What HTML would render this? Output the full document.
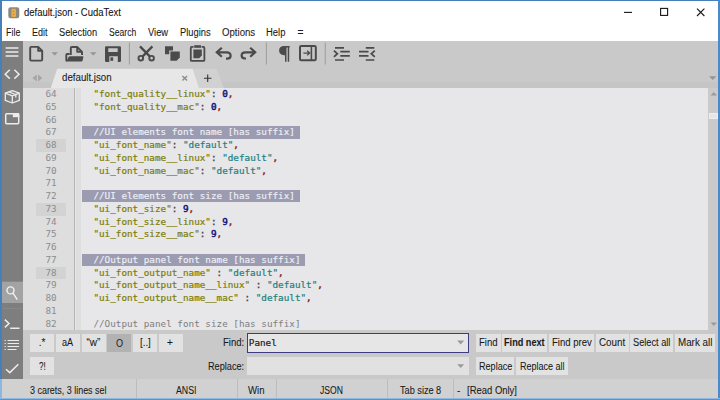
<!DOCTYPE html>
<html><head><meta charset="utf-8"><title>default.json - CudaText</title>
<style>
*{box-sizing:border-box;margin:0;padding:0}
html,body{width:720px;height:400px;overflow:hidden;background:#fff}
body{position:relative;font-family:"Liberation Sans",sans-serif;font-size:9.4px;color:#1a1a1a}
.abs,#win div,#win span.a,#win svg{position:absolute}
#win{position:absolute;left:0;top:0;width:720px;height:400px;background:#fff;overflow:hidden}
/* window frame */
.fr{background:#477fb9;z-index:50}
.t{white-space:nowrap;line-height:12px;height:12px;-webkit-text-stroke:0.2px #1a1a1a}
.f{font-size:10px;transform-origin:0 0;-webkit-text-stroke:0.08px #1a1a1a}
/* title */
#title{left:24px;top:6.5px;font-size:9.6px;color:#111}
.menu{top:26px;font-size:9.4px;color:#111}
/* toolbar */
#toolbar{left:23px;top:41px;width:696px;height:27px;background:#c9c9c9}
#sidebar{left:1px;top:41px;width:22px;height:337.8px;background:#7e7e7e}
#tabbar{left:23px;top:67px;width:696px;height:21px;background:#c9c9c9}
#editor{left:23px;top:88px;width:685px;height:242px;background:#e7e7e9;overflow:hidden}
#gutter{left:23px;top:88px;width:43.5px;height:242px;background:#dedede}
#fold{left:66.5px;top:88px;width:8px;height:242px;background:#dedede}
#gline{left:74.3px;top:88px;width:1.2px;height:242px;background:#b4b4b4}
#gline2{left:75.5px;top:88px;width:5.5px;height:242px;background:#dedede}
.ln{left:36px;width:30px;height:12.75px;line-height:12.75px;text-align:center;font-family:"DejaVu Sans Mono","Liberation Mono",monospace;font-size:9.3px;color:#8c8c8c;white-space:pre}
.curln{left:36.2px;width:30px;height:12.6px;background:#d3d3d3}
.cl{left:93.4px;height:12.75px;line-height:12.75px;font-family:"DejaVu Sans Mono","Liberation Mono",monospace;font-size:9.3px;white-space:pre;color:#555}
.cl span{position:static}
.k{color:#7e7e08;-webkit-text-stroke:0.22px #7e7e08}
.s{color:#1f8080;-webkit-text-stroke:0.22px #1f8080}
.n{color:#10107a;-webkit-text-stroke:0.45px #10107a}
.p{color:#454548;-webkit-text-stroke:0.35px #454548}
.c{color:#8e1c1c;-webkit-text-stroke:0.45px #8e1c1c}
.sel{color:#f0f0f4;-webkit-text-stroke:0.15px #f0f0f4}
.cmt{color:#7d7d7d}
.selbg{left:81.8px;height:12.6px;background:#9b9bb2}
/* scrollbar */
#vscroll{left:708.2px;top:88px;width:10.5px;height:242px;background:#cacaca}
#thumb{left:709px;top:113px;width:9.3px;height:6px;background:#e6e6e6;border:1px solid #efefef}
/* find panel */
#findp{left:23px;top:329.5px;width:696px;height:50px;background:#c9c9c9}
.btn{-webkit-text-stroke:0.2px #1a1a1a;height:18px;background:#e2e2e2;text-align:center;line-height:17.5px;font-size:9.4px;color:#1a1a1a;white-space:nowrap}
.btn.on{background:#b2b2b2}
.r1{top:333.5px}.r2{top:357px}
#status{left:1px;top:379.3px;width:718px;height:19.5px;background:#d1d1d1}
.sdiv{top:379.3px;width:1px;height:19.5px;background:#bdbdbd}
.st{top:383.5px;font-size:9.4px;color:#1a1a1a}
.lbl{font-size:9.4px;color:#1a1a1a;text-align:right}
#fin{left:247px;top:333px;width:221.5px;height:20px;background:#e6e6e6;border:1.3px solid #3c3c84}
#rin{left:247px;top:357px;width:221.5px;height:18px;background:#e1e1e1}
</style></head><body>
<div id="win">
<!-- title bar -->
<svg style="left:7.6px;top:6.9px" width="12" height="12" viewBox="0 0 12 12"><rect x="0.3" y="0.3" width="11" height="11" rx="2.2" fill="#8b897d"/><rect x="3.4" y="1.8" width="4.6" height="8.2" rx="1" fill="#e9ab4c"/><rect x="5.1" y="3.6" width="1.2" height="1.3" fill="#c98a2e"/><rect x="5.1" y="6.6" width="1.2" height="1.3" fill="#c98a2e"/></svg>
<svg style="left:620px;top:4px" width="90" height="16" viewBox="0 0 90 16"><g stroke="#161616" stroke-width="1.1" fill="none"><path d="M4 8.4h8"/><rect x="40.6" y="4.4" width="7" height="7"/><path d="M77 4.6l7.4 7.4M84.4 4.6L77 12"/></g></svg>
<!-- menu -->
<!-- toolbar -->
<div id="toolbar"></div>
<div id="tabbar"></div>
<div id="sidebar"></div>
<!-- sidebar icons -->
<svg style="left:0;top:40px" width="24" height="340" viewBox="0 40 24 340">
<g stroke="#ececec" stroke-width="1.5" fill="none" stroke-linecap="butt" stroke-linejoin="miter">
<path d="M5.6 48.1H18.4M5.6 52.1H18.4M5.6 56H18.4"/>
<path d="M9.8 69.8L5.2 74.2L9.8 78.6M14.4 69.8L19 74.2L14.4 78.6"/>
<!-- box -->
<g stroke-width="1.3" stroke-linejoin="round">
<path d="M5.3 93.2L12.3 90.6L19.3 93.2V100.4L12.3 103L5.3 100.4Z"/>
<path d="M5.3 93.2L12.3 95.8L19.3 93.2M12.3 95.8V103"/>
<path d="M8.8 91.9L15.8 94.5V97.4"/>
</g>
<!-- tab window -->
<rect x="5.7" y="113.7" width="13" height="10" rx="1"/>
<!-- search -->
</g>
<rect x="12.8" y="113.2" width="6.4" height="4" fill="#ececec"/>
<rect x="1.5" y="281.7" width="21.5" height="21.3" fill="#a3a3a3"/>
<g stroke="#f2f2f2" stroke-width="1.4" fill="none">
<circle cx="10.5" cy="290.4" r="3.5"/><path d="M13 293.2L17.3 299.6"/>
</g>
<rect x="2.5" y="308" width="19.5" height="0.9" fill="#8a8a8a"/>
<g stroke="#ececec" stroke-width="1.5" fill="none">
<path d="M4.9 319.6L9 323.5L4.9 327.4M10.2 328.3H19.5"/>
<path d="M7.6 340.5H19M7.6 343.5H19M7.6 346.5H19M7.6 349.5H16.5" stroke-width="1.1"/>
<path d="M4.6 340.5H5.8M4.6 343.5H5.8M4.6 346.5H5.8M4.6 349.5H5.8" stroke-width="1.1"/>
<path d="M6 369.2L9.8 372.6L18.3 364.3"/>
</g>
</svg>
<!-- toolbar icons -->
<svg style="left:24px;top:41px" width="696" height="26" viewBox="24 41 696 26">
<g fill="none" stroke="#4a4a4a" stroke-width="1.9" stroke-linejoin="round">
<!-- new -->
<path d="M31.2 46.9H38.2L42.2 50.9V59.6Q42.2 60.6 41.2 60.6H31.2Q30.2 60.6 30.2 59.6V47.9Q30.2 46.9 31.2 46.9Z"/>
<path d="M38.2 46.9V50.9H42.2"/>
<!-- open -->
<path d="M70.8 55V48Q70.8 47 71.8 47H77.2L82 51.8V55"/>
<path d="M77.2 47V51.8H82"/>
<path d="M69.6 54H67.2Q66.3 54 66.3 54.9V59.9Q66.3 60.8 67.1 60.8"/>
</g>
<path d="M70 56.2H82.7Q83.6 56.2 83.4 57.1L82.6 60.6Q82.4 61.5 81.5 61.5H67.2Q66.4 61.5 66.7 60.6L68.6 57Q69 56.2 70 56.2Z" fill="#4a4a4a"/>
<!-- arrows -->
<path d="M51.4 52.2H58L54.7 55.6Z" fill="#949494"/>
<path d="M90 52.2H96.6L93.3 55.6Z" fill="#949494"/>
<!-- save -->
<path d="M106.2 46.2H119.8Q121 46.2 121 47.4V60.8Q121 62 119.8 62H106.2Q105 62 105 60.8V47.4Q105 46.2 106.2 46.2ZM108.3 48.3V52H117.7V48.3ZM109.3 56.2V62H117.8V56.2Z" fill="#4b4b4b" fill-rule="evenodd"/>
<rect x="110.4" y="57.4" width="2.8" height="3.4" fill="#4b4b4b"/>
<!-- separators -->
<path d="M129.4 42.5V64.4M266.4 42.5V64.4M325.3 42.5V64.4" stroke="#a0a0a0" stroke-width="1.1"/>
<!-- scissors -->
<g fill="none" stroke="#4a4a4a" stroke-width="1.9">
<circle cx="140.8" cy="58.2" r="2.3"/><circle cx="151.6" cy="58.2" r="2.3"/>
<path d="M140 46.4L150 56.6M152.4 46.4L142.4 56.6" stroke-width="2.3"/>
</g>
<!-- copy -->
<path d="M165 46.2H173V50.6H169.2V54.2H165Z" fill="#4b4b4b"/>
<path d="M170.4 51.6H179.8V57.6L176.6 60.8H170.4Z" fill="#4b4b4b"/>
<!-- paste -->
<g fill="none" stroke="#4a4a4a" stroke-width="1.8" stroke-linejoin="round">
<path d="M193.6 46.9H191.8Q190.8 46.9 190.8 47.9V59.9Q190.8 60.9 191.8 60.9H203.4Q204.4 60.9 204.4 59.9V47.9Q204.4 46.9 203.4 46.9H201.6"/>
</g>
<rect x="194.2" y="45.2" width="6.8" height="2.6" fill="#4b4b4b"/>
<path d="M193.4 49.6H201.8V55.4L199.2 58.2H193.4Z" fill="#4b4b4b"/>
<!-- undo / redo -->
<g fill="none" stroke="#4a4a4a" stroke-width="2.2">
<path d="M221.8 47.8L216.8 52.3L221.8 56.8M217 52.3H226.6Q230.6 52.3 230.6 55.8Q230.6 58.7 227.2 58.7H226"/>
<path d="M250.2 47.8L255.2 52.3L250.2 56.8M255 52.3H245.6Q241.6 52.3 241.6 55.6Q241.6 58.5 245 58.5H246"/>
</g>
<!-- pilcrow -->
<path d="M284.2 46.1H289.7V47.5H289.2V61.7H287.7V47.5H286.5V61.7H285V55.2H284.2Q279.1 55 279.1 50.6Q279.1 46.3 284.2 46.1Z" fill="#4a4a4a"/>
<!-- indent box -->
<rect x="300" y="46" width="15.8" height="14.2" rx="1.2" fill="none" stroke="#4a4a4a" stroke-width="2"/>
<path d="M311.4 46V60.4" stroke="#4a4a4a" stroke-width="1.6"/>
<path d="M303.4 53.1H309.4M307.2 50.8L309.6 53.1L307.2 55.4" stroke="#4a4a4a" stroke-width="1.3" fill="none"/>
<!-- indent/unindent -->
<g stroke="#4a4a4a" stroke-width="1.7" fill="none">
<path d="M335 47.8H344M340.3 51.7H349.8M340.3 55.8H349.8M335 60H344"/>
<path d="M333.9 50.6L337.4 53.75L333.9 56.9"/>
<path d="M365.8 47.8H374.3M359 51.7H368.5M359 55.8H368.5M365.8 60H374.3"/>
<path d="M374.8 50.6L371.3 53.75L374.8 56.9"/>
</g>
</svg>
<!-- tab bar -->
<svg style="left:23px;top:67px" width="696" height="21" viewBox="23 67 696 21">
<rect x="23" y="82" width="696" height="6" fill="#c5c5c5"/>
<path d="M198.5 88L192.6 69H216.6L224 88Z" fill="#d1d1d1"/>
<path d="M50.8 88L57.2 68.8H192.6L199 88Z" fill="#e7e7e7"/>

<path d="M36.8 74.6V81.4L32.4 78ZM38 74.6V81.4L42.4 78Z" fill="#a6a6a6"/>
<path d="M182.4 75.9L187.1 80.6M187.1 75.9L182.4 80.6" stroke="#8c8c8c" stroke-width="1.4"/>
<path d="M204 78.2H211.4M207.7 74.5V81.9" stroke="#333" stroke-width="1.1"/>
<path d="M709 76.2H716.4L712.7 79.9Z" fill="#949494"/>
</svg>

<!-- editor -->
<div id="editor"></div>
<div id="gutter"></div><div id="fold"></div><div id="gline"></div><div id="gline2"></div>
<div class="ln" style="top:88.00px">64</div>
<div class="cl" style="top:88.00px"><span class="k">&quot;font_quality__linux&quot;</span><span class="p">: </span><span class="n">0</span><span class="c">,</span></div>
<div class="ln" style="top:100.75px">65</div>
<div class="cl" style="top:100.75px"><span class="k">&quot;font_quality__mac&quot;</span><span class="p">: </span><span class="n">0</span><span class="c">,</span></div>
<div class="ln" style="top:113.50px">66</div>
<div class="ln" style="top:126.25px">67</div>
<div class="selbg" style="top:126.10px;width:217.8px"></div>
<div class="cl sel" style="top:126.25px">//UI elements font name [has suffix]</div>
<div class="curln" style="top:139.40px"></div>
<div class="ln" style="top:139.00px">68</div>
<div class="cl" style="top:139.00px"><span class="k">&quot;ui_font_name&quot;</span><span class="p">: </span><span class="s">&quot;default&quot;</span><span class="c">,</span></div>
<div class="ln" style="top:151.75px">69</div>
<div class="cl" style="top:151.75px"><span class="k">&quot;ui_font_name__linux&quot;</span><span class="p">: </span><span class="s">&quot;default&quot;</span><span class="c">,</span></div>
<div class="ln" style="top:164.50px">70</div>
<div class="cl" style="top:164.50px"><span class="k">&quot;ui_font_name__mac&quot;</span><span class="p">: </span><span class="s">&quot;default&quot;</span><span class="c">,</span></div>
<div class="ln" style="top:177.25px">71</div>
<div class="ln" style="top:190.00px">72</div>
<div class="selbg" style="top:189.85px;width:217.8px"></div>
<div class="cl sel" style="top:190.00px">//UI elements font size [has suffix]</div>
<div class="curln" style="top:203.15px"></div>
<div class="ln" style="top:202.75px">73</div>
<div class="cl" style="top:202.75px"><span class="k">&quot;ui_font_size&quot;</span><span class="p">: </span><span class="n">9</span><span class="c">,</span></div>
<div class="ln" style="top:215.50px">74</div>
<div class="cl" style="top:215.50px"><span class="k">&quot;ui_font_size__linux&quot;</span><span class="p">: </span><span class="n">9</span><span class="c">,</span></div>
<div class="ln" style="top:228.25px">75</div>
<div class="cl" style="top:228.25px"><span class="k">&quot;ui_font_size__mac&quot;</span><span class="p">: </span><span class="n">9</span><span class="c">,</span></div>
<div class="ln" style="top:241.00px">76</div>
<div class="ln" style="top:253.75px">77</div>
<div class="selbg" style="top:253.60px;width:223.4px"></div>
<div class="cl sel" style="top:253.75px">//Output panel font name [has suffix]</div>
<div class="curln" style="top:266.90px"></div>
<div class="ln" style="top:266.50px">78</div>
<div class="cl" style="top:266.50px"><span class="k">&quot;ui_font_output_name&quot;</span><span class="p"> : </span><span class="s">&quot;default&quot;</span><span class="c">,</span></div>
<div class="ln" style="top:279.25px">79</div>
<div class="cl" style="top:279.25px"><span class="k">&quot;ui_font_output_name__linux&quot;</span><span class="p"> : </span><span class="s">&quot;default&quot;</span><span class="c">,</span></div>
<div class="ln" style="top:292.00px">80</div>
<div class="cl" style="top:292.00px"><span class="k">&quot;ui_font_output_name__mac&quot;</span><span class="p"> : </span><span class="s">&quot;default&quot;</span><span class="c">,</span></div>
<div class="ln" style="top:304.75px">81</div>
<div class="ln" style="top:317.50px">82</div>
<div class="cl cmt" style="top:317.50px">//Output panel font size [has suffix]</div>
<div id="vscroll"></div><div id="thumb"></div>
<svg style="left:708px;top:88px" width="11" height="242" viewBox="708 88 11 242"><path d="M710.6 95.4H717L713.8 92Z" fill="#9a9a9a"/><path d="M710.6 322.6H717L713.8 326Z" fill="#9a9a9a"/></svg>
<!-- find panel -->
<div id="findp"></div>
<div class="btn r1" style="left:30.1px;width:24.3px"></div>
<div class="btn r1" style="left:55.8px;width:24.3px"></div>
<div class="btn r1" style="left:81.5px;width:24.3px"></div>
<div class="btn r1 on" style="left:107.2px;width:24.3px"></div>
<div class="t" style="left:115.9px;top:337px;font-size:11.4px;line-height:13px;height:13px;transform:scaleX(0.8);transform-origin:0 0;-webkit-text-stroke:0">O</div>
<div class="btn r1" style="left:132.9px;width:24.3px"></div>
<div class="btn r1" style="left:158.6px;width:24.3px"></div>
<div class="btn r2" style="left:30.1px;width:24.3px"></div>
<div id="fin"></div><div id="rin"></div>
<svg style="left:450px;top:335px" width="18" height="40" viewBox="450 335 18 40"><path d="M457.2 340.6H464.2L460.7 344.4Z" fill="#9a9a9a"/><path d="M457.2 364.2H464.2L460.7 368Z" fill="#9a9a9a"/></svg>
<div class="t" style="left:248.8px;top:336.6px;font-family:'DejaVu Sans Mono','Liberation Mono',monospace;font-size:9.3px;color:#222">Panel</div>
<div class="btn r1" style="left:476.3px;width:24.4px"></div>
<div class="btn r1" style="left:502.2px;width:45.2px;font-weight:bold"></div>
<div class="btn r1" style="left:548.9px;width:45.3px"></div>
<div class="btn r1" style="left:595.9px;width:32.8px"></div>
<div class="btn r1" style="left:630.2px;width:42.9px"></div>
<div class="btn r1" style="left:674.7px;width:40px"></div>
<div class="btn r2" style="left:476.3px;width:38.2px"></div>
<div class="btn r2" style="left:516.2px;width:52px"></div>
<!-- status -->
<div id="status"></div>
<div class="sdiv" style="left:136px"></div><div class="sdiv" style="left:236.5px"></div><div class="sdiv" style="left:276px"></div><div class="sdiv" style="left:387px"></div><div class="sdiv" style="left:452.5px"></div>
<div class="t f" style="left:24.18px;top:7.00px;transform:scaleX(0.9464);color:#111">default.json - CudaText</div>
<div class="t f" style="left:6.48px;top:27.00px;transform:scaleX(0.8933);">File</div>
<div class="t f" style="left:32.08px;top:27.00px;transform:scaleX(0.897);">Edit</div>
<div class="t f" style="left:59.39px;top:27.00px;transform:scaleX(0.925);">Selection</div>
<div class="t f" style="left:109.22px;top:27.00px;transform:scaleX(0.859);">Search</div>
<div class="t f" style="left:147.82px;top:27.00px;transform:scaleX(0.9365);">View</div>
<div class="t f" style="left:179.55px;top:27.00px;transform:scaleX(0.9323);">Plugins</div>
<div class="t f" style="left:221.77px;top:27.00px;transform:scaleX(0.9612);">Options</div>
<div class="t f" style="left:266.34px;top:27.00px;transform:scaleX(0.9436);">Help</div>
<div class="t f" style="left:297.60px;top:27.00px;transform:scaleX(1.0);">=</div>
<div class="t f" style="left:61.76px;top:72.00px;transform:scaleX(0.97);">default.json</div>
<div class="t f" style="left:29.80px;top:385.00px;transform:scaleX(0.8935);">3 carets, 3 lines sel</div>
<div class="t f" style="left:176.45px;top:385.00px;transform:scaleX(0.8756);">ANSI</div>
<div class="t f" style="left:248.45px;top:385.00px;transform:scaleX(0.9612);">Win</div>
<div class="t f" style="left:320.44px;top:385.00px;transform:scaleX(0.8583);">JSON</div>
<div class="t f" style="left:400.02px;top:385.00px;transform:scaleX(0.9153);">Tab size 8</div>
<div class="t f" style="left:457.00px;top:385.00px;transform:scaleX(1.0);">-</div>
<div class="t f" style="left:466.54px;top:385.00px;transform:scaleX(0.9463);">[Read Only]</div>
<div class="t f" style="left:223.29px;top:337.00px;transform:scaleX(0.9512);">Find:</div>
<div class="t f" style="left:208.31px;top:361.00px;transform:scaleX(0.9139);">Replace:</div>
<div class="t f" style="left:479.13px;top:337.00px;transform:scaleX(0.9556);">Find</div>
<div class="t f" style="left:503.96px;top:337.00px;transform:scaleX(0.9143);font-weight:bold">Find next</div>
<div class="t f" style="left:551.73px;top:337.00px;transform:scaleX(0.9537);">Find prev</div>
<div class="t f" style="left:599.16px;top:337.00px;transform:scaleX(0.9829);">Count</div>
<div class="t f" style="left:633.29px;top:337.00px;transform:scaleX(0.9215);">Select all</div>
<div class="t f" style="left:678.11px;top:337.00px;transform:scaleX(0.9807);">Mark all</div>
<div class="t f" style="left:479.07px;top:361.00px;transform:scaleX(0.907);">Replace</div>
<div class="t f" style="left:520.28px;top:361.00px;transform:scaleX(0.9);">Replace all</div>
<div class="t f" style="left:38.75px;top:337.00px;transform:scaleX(1.0);">.*</div>
<div class="t f" style="left:62.39px;top:337.00px;transform:scaleX(0.9106);">aA</div>
<div class="t f" style="left:86.48px;top:337.00px;transform:scaleX(1.0);">“w”</div>
<div class="t f" style="left:139.52px;top:337.00px;transform:scaleX(0.9744);">[..]</div>
<div class="t f" style="left:167.00px;top:337.00px;transform:scaleX(1.0);">+</div>
<div class="t f" style="left:39.20px;top:361.00px;transform:scaleX(0.8);">?!</div>
<div class="fr" style="left:0;top:0;width:720px;height:1px"></div><div class="fr" style="left:0;top:0;width:1.6px;height:400px"></div><div class="fr" style="left:718.3px;top:0;width:1.7px;height:400px;background:#4a8aca"></div><div class="fr" style="left:0;top:379px;width:1.8px;height:21px;background:#8db7e0"></div><div class="fr" style="left:0;top:397.6px;width:720px;height:2.4px;background:linear-gradient(#b4d0ec,#5b97d2 60%,#4f8ccb)"></div>
</div>
</body></html>
